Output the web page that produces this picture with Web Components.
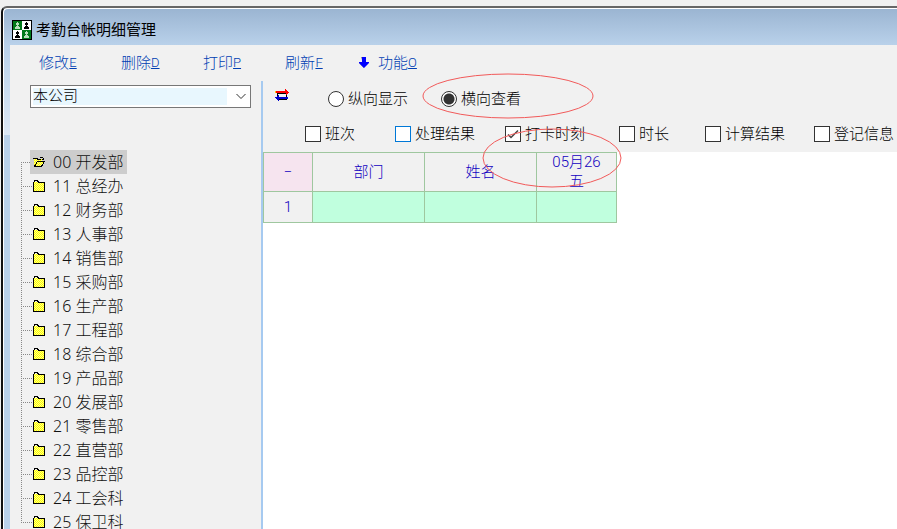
<!DOCTYPE html>
<html lang="zh-CN">
<head>
<meta charset="utf-8">
<title>考勤台帐明细管理</title>
<style>
  html, body {
    height: 100%;
  }
  body {
    margin: 0;
    overflow: hidden;
    background: #f0f0f0;
    color: #000;
    font-family: "Roboto", "Noto Sans CJK SC", sans-serif;
    font-size: 15px;
    font-weight: 300;
    line-height: 20px;
  }
</style>
</head>
<body>
<app-window heading="考勤台帐明细管理">
  <menu-bar slot="menu">
    <menu-entry key="E">修改</menu-entry>
    <menu-entry key="D">删除</menu-entry>
    <menu-entry key="P">打印</menu-entry>
    <menu-entry key="F">刷新</menu-entry>
    <menu-entry key="O" arrow>功能</menu-entry>
  </menu-bar>
  <dept-panel slot="side"></dept-panel>
  <record-panel slot="main"></record-panel>
</app-window>

<script>
// attach an open shadow root with the given markup
const render = (host, html) => {
  host.attachShadow({mode: 'open'}).innerHTML = html;
};

class AppWindow extends HTMLElement {
  constructor() {
    super();
    render(this, `
      <style>
        :host {
          display: flex;
          height: 100%;
          box-sizing: border-box;
          padding: 6px 0 0 1px;
        }
        .frame {
          flex: 1;
          min-width: 0;
          display: flex;
          flex-direction: column;
          border-top: 2px solid #666;
          border-left: 2px solid #111;
          border-top-left-radius: 6px;
          background: linear-gradient(#9ab4d1, #b9d1ea 37px, #dce8f5 127px, #b9d1ea 127px);
          box-shadow: inset 1px 1px #fff;
        }
        header {
          height: 37px;
          flex: none;
          display: flex;
          align-items: center;
          gap: 4px;
          padding: 7px 0 0 9px;
          box-sizing: border-box;
        }
        h1 {
          margin: 0;
          font-size: 15px;
          font-weight: 400;
        }
        .client {
          flex: 1;
          min-height: 0;
          margin-left: 7px;
          display: flex;
          flex-direction: column;
          background: #f1f1f1;
        }
        .body {
          flex: 1;
          min-height: 0;
          display: flex;
        }
      </style>
      <div class="frame">
        <header>
          <svg width="20" height="20" viewBox="0 0 20 20" shape-rendering="crispEdges">
            <rect width="20" height="20" fill="#000"/>
            <path fill="#007a1a" d="M1 1h9v9H1zM10 10h9v9h-9z"/>
            <path fill="#fff" d="M10 1h9v9h-9zM1 10h9v9H1z"/>
            <path fill="#b9e0bd" d="M5 2h1v1h1v2H6v1h1v1h1v2H3V7h1V6h1V5H4V3h1zM14 11h1v1h1v2h-1v1h1v1h1v2h-5v-2h1v-1h1v-1h-1v-2h1z"/>
            <path fill="#000" d="M14 2h1v1h1v2h-1v1h1v1h1v2h-5V7h1V6h1V5h-1V3h1zM5 11h1v1h1v2H6v1h1v1h1v2H3v-2h1v-1h1v-1H4v-2h1z"/>
          </svg>
          <h1></h1>
        </header>
        <div class="client">
          <slot name="menu"></slot>
          <div class="body">
            <slot name="side"></slot>
            <slot name="main"></slot>
          </div>
        </div>
      </div>
    `);
    this.shadowRoot.querySelector('h1').textContent = this.getAttribute('heading');
  }
}

class MenuBar extends HTMLElement {
  constructor() {
    super();
    render(this, `
      <style>
        :host {
          display: flex;
          flex: none;
          gap: 44px;
          height: 36px;
          box-sizing: border-box;
          padding: 8px 0 0 29px;
        }
      </style>
      <slot></slot>
    `);
  }
}

class MenuEntry extends HTMLElement {
  constructor() {
    super();
    render(this, `
      <style>
        :host {
          display: block;
        }
        button {
          display: flex;
          align-items: center;
          height: 20px;
          padding: 0;
          border: 0;
          background: none;
          color: #003eb3;
          font: inherit;
        }
        svg {
          margin: 0 9px 0 -8px;
        }
        u {
          width: 8px;
          font-size: 13px;
        }
      </style>
      <button type="button"><slot></slot><u></u></button>
    `);
    this.shadowRoot.querySelector('u').textContent = this.getAttribute('key');
    if (this.hasAttribute('arrow')) {
      this.shadowRoot.querySelector('button').insertAdjacentHTML('afterbegin', `
        <svg width="10" height="12" viewBox="0 0 10 12">
          <path fill="#888" d="M2 0h2v5H0v1l5 5V9z"/>
          <path fill="#00f" d="M3 0h4v5h3v1l-5 5-5-5V5h3z"/>
        </svg>`);
    }
  }
}

const folder = `
  <svg width="14" height="14" viewBox="0 0 14 14" shape-rendering="crispEdges">
    <path fill="url(#dither)" d="M1 3h11v10H1z"/>
    <path fill="#000" d="M2 1h4v1h1v1h6v10H1V3h1zM3 2v1H2v9h10V4H6V3H5V2z" fill-rule="evenodd"/>
  </svg>`;
const openFolder = `
  <svg width="14" height="14" viewBox="0 0 14 14" shape-rendering="crispEdges">
    <path fill="url(#dither)" d="M2 4h8v2h3l-3 5H2z"/>
    <path fill="none" stroke="#000" d="M1 3.500h4l1 1h3M2.500 11.500l3-5h7l-3 5zM8 2.500h3M11.500 3v2M10 4.500h2"/>
  </svg>`;

const departments = [
  '00 开发部', '11 总经办', '12 财务部', '13 人事部',
  '14 销售部', '15 采购部', '16 生产部', '17 工程部',
  '18 综合部', '19 产品部', '20 发展部', '21 零售部',
  '22 直营部', '23 品控部', '24 工会科', '25 保卫科',
];

class DeptPanel extends HTMLElement {
  constructor() {
    super();
    render(this, `
      <style>
        :host {
          display: block;
          flex: none;
          width: 251px;
          overflow: hidden;
          border-right: 2px solid #a6caf0;
        }
        .picker {
          position: relative;
          margin: 4px 10px 0 20px;
        }
        select {
          appearance: none;
          display: block;
          width: 100%;
          height: 23px;
          padding: 0 22px 3px 2px;
          border: 1px solid #777;
          border-radius: 0;
          outline: 0;
          background: linear-gradient(#e8f7fe, #e8f7fe) 2px 2px / calc(100% - 25px) 17px no-repeat #fff;
          color: #000;
          font: inherit;
        }
        .picker svg {
          position: absolute;
          right: 5px;
          top: 8px;
          pointer-events: none;
        }
        .defs {
          display: block;
        }
        ul {
          list-style: none;
          margin: 42px 0 0;
          padding: 0 0 0 11px;
          font-family: "Noto Sans", "Noto Sans CJK SC", sans-serif;
          font-size: 16px;
          line-height: 24px;
          color: #111;
        }
        li {
          display: flex;
          height: 24px;
          background:
            repeating-linear-gradient(#888 0 1px, transparent 1px 2px) 0 0 / 1px 24px no-repeat,
            repeating-linear-gradient(90deg, #888 0 1px, transparent 1px 2px) 0 12px / 12px 1px no-repeat;
        }
        li:first-child {
          background-position: 0 12px, 0 12px;
        }
        li:last-child {
          background-size: 1px 12px, 12px 1px;
        }
        button {
          display: flex;
          align-items: center;
          gap: 7px;
          height: 24px;
          margin-left: 9px;
          padding: 0 4px 0 2px;
          border: 0;
          background: none;
          color: inherit;
          font: inherit;
        }
        .selected {
          background: #cdcdcd;
        }
      </style>
      <svg class="defs" width="0" height="0">
        <pattern id="dither" width="2" height="2" patternUnits="userSpaceOnUse">
          <path fill="#ff0" d="M0 0h2v2H0z"/>
          <path fill="#ff8" d="M0 0h1v1H0zM1 1h1v1H1z"/>
        </pattern>
      </svg>
      <div class="picker">
        <select aria-label="公司"><option>本公司</option></select>
        <svg width="10" height="7" viewBox="0 0 10 7">
          <path fill="none" stroke="#333" d="M.5 1l4.500 4.500L9.500 1"/>
        </svg>
      </div>
      <ul>
        ${departments.map((name, i) => `
          <li><button type="button" class="${i ? '' : 'selected'}">${i ? folder : openFolder}<span>${name}</span></button></li>
        `).join('')}
      </ul>
    `);
  }
}

// one radio or tick box with its label
class ChoiceBox extends HTMLElement {
  constructor() {
    super();
    const type = this.getAttribute('type') || 'checkbox';
    render(this, `
      <style>
        :host {
          display: block;
        }
        label {
          display: flex;
          align-items: center;
          gap: 4px;
          white-space: nowrap;
        }
        input {
          appearance: none;
          flex: none;
          width: 16px;
          height: 16px;
          margin: 0;
          border: 1px solid #333;
          background: #fff;
        }
        input[type=radio] {
          border-radius: 50%;
        }
        input[type=radio]:checked {
          background: radial-gradient(#333 0 5px, #fff 6px);
        }
        .box {
          display: grid;
        }
        .box > * {
          grid-area: 1 / 1;
        }
        svg {
          visibility: hidden;
          pointer-events: none;
        }
        input[type=checkbox]:checked + svg {
          visibility: visible;
        }
        :host([hot]) input {
          border-color: #0078d7;
        }
      </style>
      <label>
        <span class="box">
          <input type="${type}" ${this.hasAttribute('checked') ? 'checked' : ''}>
          <svg width="16" height="16" viewBox="0 0 16 16">
            <path fill="none" stroke="#444" stroke-width="1.500" d="M3 8.500l3 3L13 4.500"/>
          </svg>
        </span>
        <slot></slot>
      </label>
    `);
  }
}

class RecordTable extends HTMLElement {
  constructor() {
    super();
    render(this, `
      <style>
        :host {
          display: block;
        }
        table {
          border-collapse: collapse;
          table-layout: fixed;
          width: 354px;
          color: #1000c0;
          line-height: 19px;
        }
        th, td {
          box-sizing: border-box;
          padding: 0;
          border: 1px solid #9fc79f;
          background: #f1f1f1;
          font-weight: inherit;
          text-align: center;
        }
        thead th {
          height: 39px;
        }
        tbody th, td {
          height: 31px;
        }
        td {
          background: #c0ffde;
        }
        thead th:first-child {
          background: #f6e4ef;
        }
        .no { width: 49px; }
        .wide { width: 112px; }
      </style>
      <table>
        <colgroup><col class="no"><col class="wide"><col class="wide"><col></colgroup>
        <thead>
          <tr><th>−</th><th>部门</th><th>姓名</th><th>05月26<br>五</th></tr>
        </thead>
        <tbody>
          <tr><th>1</th><td></td><td></td><td></td></tr>
        </tbody>
      </table>
    `);
  }
}

class RecordPanel extends HTMLElement {
  constructor() {
    super();
    render(this, `
      <style>
        :host {
          display: flex;
          flex-direction: column;
          flex: 1;
          min-width: 0;
          position: relative;
        }
        .modes {
          display: flex;
          gap: 33px;
          padding: 8px 0 0 12px;
        }
        .modes svg {
          margin-right: 6px;
        }
        .fields {
          display: grid;
          grid-template-columns: 90px 110px 114px 86px 109px auto;
          padding: 15px 0 8px 42px;
        }
        .sheet {
          flex: 1;
          background: #fff;
        }
        .marks {
          position: absolute;
          left: 0;
          top: 0;
          overflow: visible;
          pointer-events: none;
        }
      </style>
      <div class="modes">
        <svg width="14" height="13" viewBox="0 0 14 13" shape-rendering="crispEdges">
          <path fill="#000" d="M2 4h9v1H2zM3 10h9v1H3zM2 4h1v4H2zM11 4h1v5h-1z"/>
          <path fill="#f00" d="M1 2h9V0h1v1h1v1h1v1h1v1h-1v1h-1v1h-1V4H1z"/>
          <path fill="#00c" d="M3 6h1v2h9v2H4v2H3v-1H2v-1H1V9H0V8h2V7h1z"/>
          <path fill="#fc0" d="M0 2h1v2H0z"/>
        </svg>
        <choice-box type="radio">纵向显示</choice-box>
        <choice-box type="radio" checked>横向查看</choice-box>
      </div>
      <div class="fields">
        <choice-box>班次</choice-box>
        <choice-box hot>处理结果</choice-box>
        <choice-box checked>打卡时刻</choice-box>
        <choice-box>时长</choice-box>
        <choice-box>计算结果</choice-box>
        <choice-box>登记信息</choice-box>
      </div>
      <div class="sheet"><record-table></record-table></div>
      <svg class="marks" width="380" height="120" viewBox="0 0 380 120" fill="none" stroke="#f25a5a">
        <ellipse cx="245" cy="15" rx="85" ry="22"/>
        <ellipse cx="289" cy="77" rx="69" ry="29"/>
      </svg>
    `);
  }
}

customElements.define('menu-entry', MenuEntry);
customElements.define('menu-bar', MenuBar);
customElements.define('choice-box', ChoiceBox);
customElements.define('record-table', RecordTable);
customElements.define('dept-panel', DeptPanel);
customElements.define('record-panel', RecordPanel);
customElements.define('app-window', AppWindow);
</script>
</body>
</html>
